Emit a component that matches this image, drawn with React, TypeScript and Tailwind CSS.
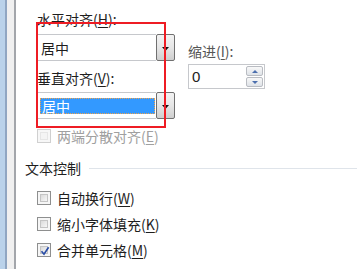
import React from 'react';

const font = { fontFamily: '"Noto Sans CJK SC", "Noto Sans", sans-serif' };

function Key({ k }: { k: string }) {
  return (
    <>
      (<span className="underline underline-offset-2">{k}</span>)
    </>
  );
}

function Arrow() {
  return (
    <svg width="7" height="4" viewBox="0 0 7 4" className="mt-[3px]">
      <path d="M0 0h7L3.5 4z" fill="#111" />
    </svg>
  );
}

function Combo({ selected }: { selected?: boolean }) {
  return (
    <div className="flex h-[27px]">
      <div className="flex-1 flex items-center border border-[#c6c8cc] border-r-0 bg-white pl-[2px] pr-[1px]">
        {selected ? (
          <div className="flex-1 h-[16px] bg-[#3399ff] border border-dotted border-[#f0a24a] text-white text-[14px] leading-[14px] pl-[1px]">
            居中
          </div>
        ) : (
          <span className="text-[14px] leading-[18px] text-[#1e1e1e] pl-[1px]">居中</span>
        )}
      </div>
      <div className="w-[19px] flex items-center justify-center border border-[#707070] rounded-[2px] bg-gradient-to-b from-[#f3f3f3] via-[#e6e6e6] to-[#cfcfcf]">
        <Arrow />
      </div>
    </div>
  );
}

function Check({ checked, disabled }: { checked?: boolean; disabled?: boolean }) {
  return (
    <div
      className={`w-[14px] h-[14px] border p-[2px] flex ${
        disabled ? 'border-[#d0d0d0] bg-[#f7f7f7]' : 'border-[#8e8f8f] bg-[#f6f6f6]'
      }`}
    >
      <div
        className={`flex-1 relative border ${
          disabled
            ? 'border-[#e6e6e6] bg-[#f4f4f4]'
            : 'border-[#c4c4c4] bg-gradient-to-br from-[#dadada] to-[#f7f7f7]'
        }`}
      >
        {checked && (
          <svg width="10" height="10" viewBox="0 0 10 10" className="absolute -left-[1px] -top-[1px]">
            <path d="M1.5 5.2L4 8.2 8.6 1.2" stroke="#2b4ea6" strokeWidth="1.7" fill="none" />
          </svg>
        )}
      </div>
    </div>
  );
}

function CheckRow({ label, k, checked, disabled, className = '' }: { label: string; k: string; checked?: boolean; disabled?: boolean; className?: string }) {
  return (
    <div className={`flex items-center h-[18px] ${className}`}>
      <Check checked={checked} disabled={disabled} />
      <span className={`ml-[6px] text-[14px] leading-[18px] ${disabled ? 'text-[#a0a0a0]' : 'text-[#1e1e1e]'}`}>
        {label}
        <Key k={k} />
      </span>
    </div>
  );
}

export default function App() {
  return (
    <div className="relative w-[357px] h-[269px] flex bg-white overflow-hidden" style={font}>
      {/* left window edge */}
      <div className="flex shrink-0">
        <div className="w-[5px] bg-[#bad2ea]" />
        <div className="w-[2px] bg-[#90a6c2]" />
        <div className="w-[7px] bg-[#f0f0f0]" />
        <div className="w-[2px] bg-[#a3a6ab]" />
      </div>

      <div className="flex-1 pl-[21px] pt-[10px] text-[#1e1e1e]">
        <div className="flex">
          <div className="w-[138px]">
            <div className="h-[18px] text-[14px] leading-[18px]">
              水平对齐<Key k="H" />:
            </div>
            <div className="mt-[6px]">
              <Combo />
            </div>
            <div className="mt-[8px] h-[18px] text-[14px] leading-[18px]">
              垂直对齐<Key k="V" />:
            </div>
            <div className="mt-[5px]">
              <Combo selected />
            </div>
            <CheckRow label="两端分散对齐" k="E" disabled className="mt-[8px]" />
          </div>

          <div className="ml-[13px] pt-[32px]">
            <div className="h-[18px] text-[14px] leading-[18px] text-[#555]">
              缩进<Key k="I" />:
            </div>
            <div className="mt-[4px] w-[77px] h-[25px] border border-[#c6c8cc] flex items-center pl-[3px] pr-[1px]">
              <span className="flex-1 text-[15px] leading-[18px] text-[#222]" style={{ fontFamily: '"Liberation Sans", sans-serif' }}>0</span>
              <div className="w-[17px] h-[21px] flex flex-col">
                <div className="h-[10px] border border-[#b9bcc2] rounded-[2px] bg-gradient-to-b from-[#f8f8f8] to-[#dfe3e8] flex items-center justify-center">
                  <svg width="6" height="3" viewBox="0 0 6 3"><path d="M0 3h6L3 0z" fill="#4c6fae" /></svg>
                </div>
                <div className="mt-[1px] h-[10px] border border-[#b9bcc2] rounded-[2px] bg-gradient-to-b from-[#f8f8f8] to-[#dfe3e8] flex items-center justify-center">
                  <svg width="6" height="3" viewBox="0 0 6 3"><path d="M0 0h6L3 3z" fill="#4c6fae" /></svg>
                </div>
              </div>
            </div>
          </div>
        </div>

        <div className="mt-[14px] -ml-[12px] flex items-center h-[18px]">
          <span className="text-[14px] leading-[18px]">文本控制</span>
          <div className="flex-1 ml-[8px] h-[1px] bg-[#dfe4ea]" />
        </div>

        <CheckRow label="自动换行" k="W" className="mt-[12px]" />
        <CheckRow label="缩小字体填充" k="K" className="mt-[8px]" />
        <CheckRow label="合并单元格" k="M" checked className="mt-[8px]" />
      </div>

      {/* red annotation box */}
      <div className="absolute left-[36px] top-[22px] w-[130px] h-[106px] border-2 border-[#ee1c24]" />
    </div>
  );
}
